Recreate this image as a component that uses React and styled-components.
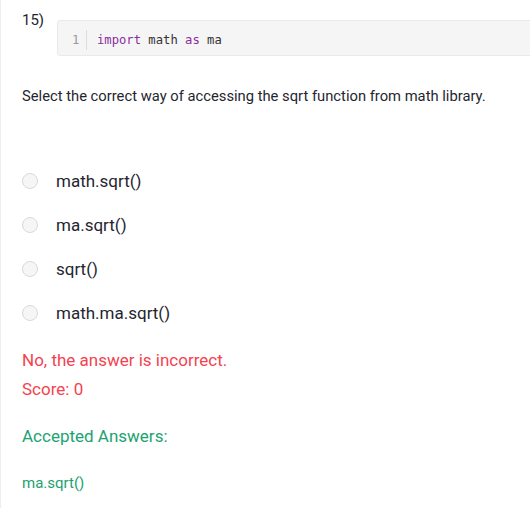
import React from "react";
import styled, { createGlobalStyle } from "styled-components";

const Global = createGlobalStyle`
  html, body { margin: 0; padding: 0; background: #fff; }
  body { font-family: Roboto, "Noto Sans", sans-serif; color: #212121; }
`;

const Page = styled.div`
  width: 530px;
  height: 508px;
  box-sizing: border-box;
  border-left: 1px solid #eeeeee;
  padding: 10px 0 0 21px;
  overflow: hidden;
`;

const Header = styled.div`
  display: flex;
  align-items: flex-start;
`;

const Number = styled.div`
  font-size: 15px;
  line-height: 21px;
  width: 35px;
  flex: none;
  color: #1f2630;
`;

const CodeBlock = styled.div`
  margin-top: 10px;
  flex: 1;
  display: flex;
  align-items: stretch;
  background: #f5f5f5;
  border: 1px solid #e9e9e9;
  border-right: none;
  border-radius: 4px 0 0 4px;
  padding: 9px 0 5px 0;
  font-family: "DejaVu Sans Mono", "Liberation Mono", monospace;
  font-size: 12.2px;
  line-height: 20px;
`;

const Gutter = styled.div`
  width: 29px;
  box-sizing: border-box;
  padding-left: 14px;
  border-right: 1px solid #dddddd;
  color: #999999;
`;

const Code = styled.div`
  padding-left: 10px;
  color: #333333;
  white-space: pre;
`;

const Keyword = styled.span`
  color: #8a2da0;
`;

const Question = styled.p`
  margin: 30px 0 0 0;
  font-size: 14.75px;
  line-height: 20px;
  color: #1f2630;
`;

const Options = styled.div`
  margin-top: 53px;
  display: flex;
  flex-direction: column;
`;

const Option = styled.label`
  display: flex;
  align-items: center;
  height: 44px;
  font-size: 17px;
  color: #1f2630;
`;

const Radio = styled.span`
  width: 16px;
  height: 16px;
  box-sizing: border-box;
  border-radius: 50%;
  border: 1px solid #d9d9d9;
  background: #f6f6f6;
  margin-right: 18px;
  flex: none;
`;

const Feedback = styled.div`
  color: ${(p) => p.$color};
  font-size: ${(p) => p.$size}px;
  line-height: ${(p) => p.$lh}px;
  margin-top: ${(p) => p.$mt}px;
`;

const options = ["math.sqrt()", "ma.sqrt()", "sqrt()", "math.ma.sqrt()"];

export default function App() {
  return (
    <>
      <Global />
      <Page>
        <Header>
          <Number>15)</Number>
          <CodeBlock>
            <Gutter>1</Gutter>
            <Code>
              <Keyword>import</Keyword> math <Keyword>as</Keyword> ma
            </Code>
          </CodeBlock>
        </Header>
        <Question>
          Select the correct way of accessing the sqrt function from math library.
        </Question>
        <Options>
          {options.map((o) => (
            <Option key={o}>
              <Radio />
              {o}
            </Option>
          ))}
        </Options>
        <Feedback $color="#f4424f" $size={17} $lh={24} $mt={13}>
          No, the answer is incorrect.
        </Feedback>
        <Feedback $color="#f4424f" $size={17} $lh={24} $mt={5}>
          Score: 0
        </Feedback>
        <Feedback $color="#1ba370" $size={17} $lh={24} $mt={23}>
          Accepted Answers:
        </Feedback>
        <Feedback $color="#1ba370" $size={15} $lh={20} $mt={25}>
          ma.sqrt()
        </Feedback>
      </Page>
    </>
  );
}
